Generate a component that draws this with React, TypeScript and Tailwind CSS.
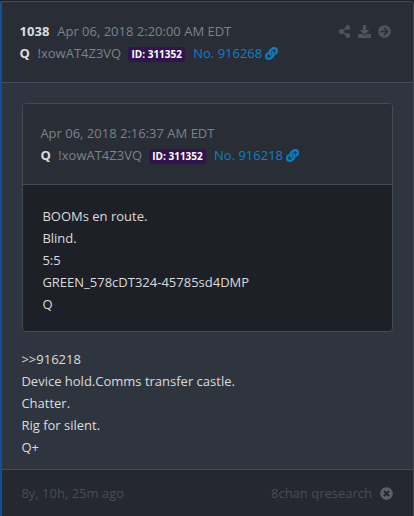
import { FaArrowCircleRight, FaDownload, FaLink, FaShareAlt, FaTimesCircle } from 'react-icons/fa';

const quoted = ['BOOMs en route.', 'Blind.', '5:5', 'GREEN_578cDT324-45785sd4DMP', 'Q'];
const message = ['>>916218', 'Device hold.Comms transfer castle.', 'Chatter.', 'Rig for silent.', 'Q+'];

function Author({ no }: { no: string }) {
  return (
    <div className="flex h-[22px] items-center whitespace-nowrap">
      <span className="font-bold text-[#dcdcdc]">Q</span>
      <span className="ml-[7.6px]">!xowAT4Z3VQ</span>
      <span className="mt-0.5 ml-[7px] flex h-[15px] w-[57px] items-center justify-center rounded-[4px] bg-[#32124f] text-[10px] font-bold text-white">
        ID: 311352
      </span>
      <a className="ml-2 flex items-center text-[#0a82c8]">
        No. {no}
        <FaLink className="ml-[3px] stroke-current stroke-[24] text-[13px]" />
      </a>
    </div>
  );
}

export default function App() {
  return (
    <div className="h-[516px] w-[414px] overflow-hidden bg-[#1d2027] pt-px font-['Open_Sans','Noto_Sans',sans-serif] text-[13px] leading-[22px] text-[#7d828e]">
      <article className="flex h-[515px] flex-col overflow-hidden rounded-tr-[4px] border-t border-r border-l-2 border-t-[#454a55] border-r-[#454a55] border-l-[#0f4f94] bg-[#2f353f]">
        <header className="flex justify-between border-b border-[#454a55] bg-[#292d36] py-[18px] pr-[22px] pl-[17.6px]">
          <div>
            <div className="flex">
              <span className="font-bold text-[#dcdcdc]">1038</span>
              <span className="ml-[7.9px]">Apr 06, 2018 2:20:00 AM EDT</span>
            </div>
            <Author no="916268" />
          </div>
          <div className="flex h-[22px] items-center gap-[7px] text-[13px] text-[#4e535f]">
            <FaShareAlt />
            <FaDownload />
            <FaArrowCircleRight />
          </div>
        </header>

        <div className="flex-1 px-5 pt-5 text-[#dcdcdc]">
          {/* quoted post */}
          <div className="overflow-hidden rounded-[4px] border border-[#454a55] bg-[#1e2027]">
            <div className="border-b border-[#454a55] bg-[#292d36] px-[17.4px] py-[18px] text-[#7d828e]">
              <div>Apr 06, 2018 2:16:37 AM EDT</div>
              <Author no="916218" />
            </div>
            <div className="px-[19.4px] pt-5 pb-4">
              {quoted.map((line) => (
                <p key={line}>{line}</p>
              ))}
            </div>
          </div>

          <div className="mt-4 -ml-[0.6px]">
            {message.map((line) => (
              <p key={line}>{line}</p>
            ))}
          </div>
        </div>

        <footer className="flex h-[47px] items-center justify-between border-t border-[#454a55] bg-[#252830] pr-5 pl-[19.4px] text-[#484d59]">
          <span>8y, 10h, 25m ago</span>
          <span className="flex items-center gap-2">
            8chan qresearch
            <FaTimesCircle className="text-[13px] text-[#5a5f6b]" />
          </span>
        </footer>
      </article>
    </div>
  );
}
